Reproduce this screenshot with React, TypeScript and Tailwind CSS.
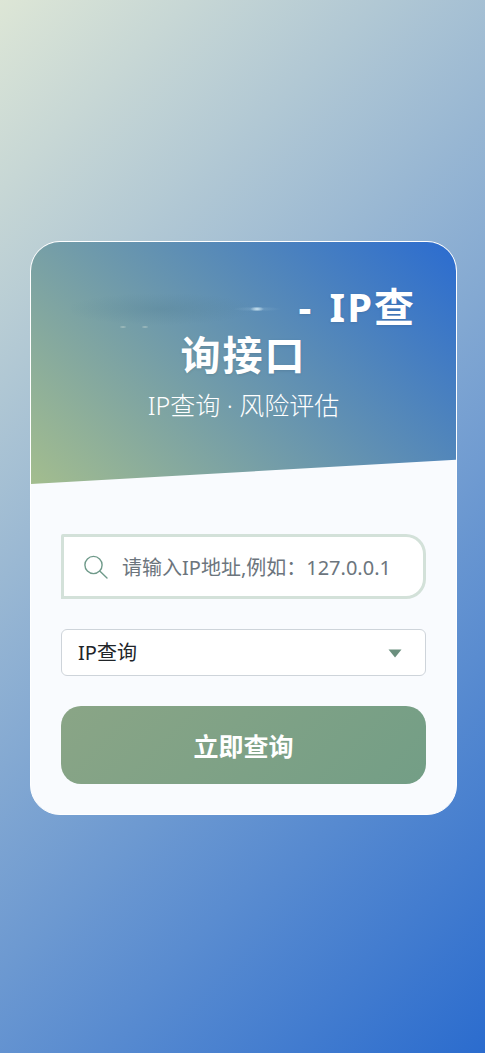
import React, { useState } from 'react';

const font = "font-['Noto_Sans','Noto_Sans_CJK_SC',sans-serif]";

const SearchIcon: React.FC = () => (
    <svg className="w-6 h-6 shrink-0" viewBox="0 0 24 24" fill="none" stroke="#6f9a8a" strokeWidth="1.4" strokeLinecap="round">
        <circle cx="9.5" cy="10" r="8.6" />
        <path d="M16 16.3 L23 23" />
    </svg>
);

export default function App() {
    const [ip, setIp] = useState('');

    return (
        <div className={`${font} min-h-screen flex items-center pt-[3px] pl-[30px] bg-[linear-gradient(135deg,#dde6d6_0%,#2b6cce_100%)]`}>
            <div className="w-[427px] h-[574px] bg-[#f9fbfe] border border-white rounded-[30px] overflow-hidden">
                <div className="h-[242px] pt-[41px] px-[30px] text-center text-white bg-[linear-gradient(45deg,#a3bd8e_0%,#2b6cd0_100%)] [clip-path:polygon(0_0,100%_0,100%_90%,0_100%)]">
                    <h1 className="text-[40px] leading-[48px] font-bold tracking-[2px] [word-spacing:4px] [text-shadow:0_1px_3px_rgba(0,0,0,0.1)]">
                        {/* logo image that came out as a stretched smear */}
                        <span className="inline-block w-[211px] h-[34px] align-[-6px] bg-[radial-gradient(ellipse_7px_2.5px_at_186px_15px,rgba(225,245,252,0.85),transparent),radial-gradient(ellipse_24px_2.5px_at_186px_15px,rgba(190,220,235,0.22),transparent),radial-gradient(ellipse_4px_1px_at_52px_33px,rgba(215,225,215,0.7),transparent),radial-gradient(ellipse_4px_1px_at_74px_33px,rgba(215,225,215,0.7),transparent),radial-gradient(ellipse_95px_16px_at_90px_15px,rgba(70,115,135,0.22),transparent)]" /> - IP查询接口
                    </h1>
                    <p className="mt-[7px] text-[25px] leading-[38px] font-light">IP查询 · 风险评估</p>
                </div>

                <div className="px-[30px] pt-[50px]">
                    <div className="flex items-center gap-[14px] h-[65px] pl-[20px] pr-4 bg-white border-[3px] border-[#d3e1d9] rounded-tl-[2px] rounded-bl-none rounded-r-[20px]">
                        <SearchIcon />
                        <input
                            type="text"
                            value={ip}
                            onChange={(e) => setIp(e.target.value)}
                            placeholder="请输入IP地址,例如：127.0.0.1"
                            className="flex-1 min-w-0 pt-[3px] text-[20px] bg-transparent outline-none placeholder:text-[#6c757d]"
                        />
                    </div>

                    <div className="relative mt-[30px]">
                        <select className="w-full h-[47px] pl-4 pr-10 pt-[1px] text-[20px] text-[#212529] bg-white border border-[#ced4da] rounded-md appearance-none outline-none">
                            <option>IP查询</option>
                        </select>
                        <svg className="absolute right-[24px] top-[20px] w-[14px] h-[9px] pointer-events-none" viewBox="0 0 14 9" fill="#6b8f7e">
                            <path d="M0.5 0.5 H13.5 L7 8.5 Z" />
                        </svg>
                    </div>

                    <button className="w-full h-[78px] mt-[30px] pt-[3px] text-[25px] font-bold text-white rounded-[20px] bg-[linear-gradient(135deg,#8aa586_0%,#739e86_100%)]">
                        立即查询
                    </button>
                </div>
            </div>
        </div>
    );
}
